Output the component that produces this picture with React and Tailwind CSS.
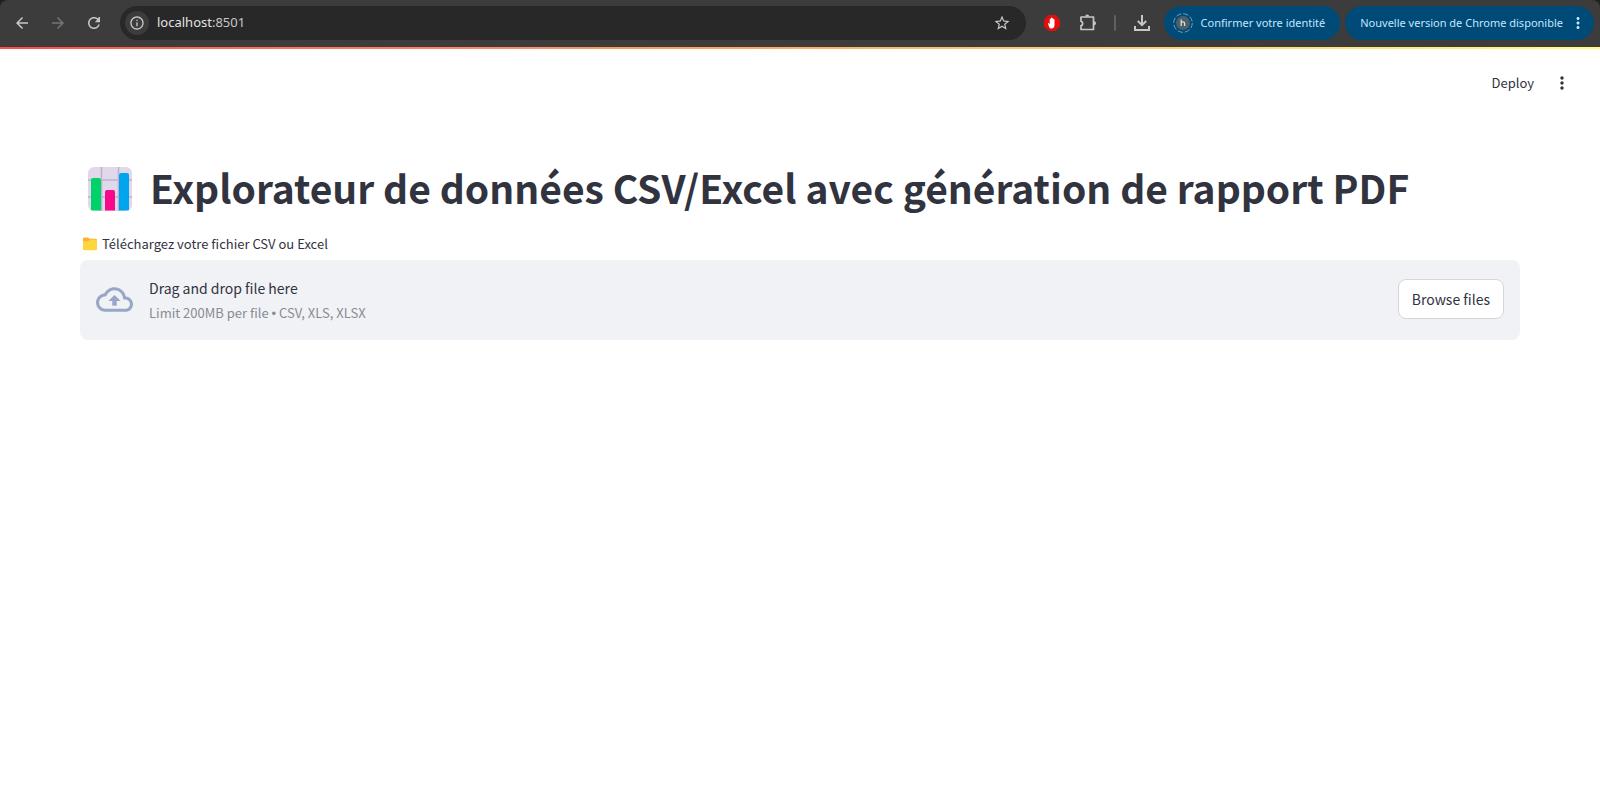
import React, { useRef } from "react";

const sourceSans = "font-['Noto_Sans_CJK_SC',sans-serif]";
const chromeSans = "font-['Noto_Sans','Open_Sans',sans-serif]";

const dots =
  "M12 8c1.100 0 2-.9 2-2s-.9-2-2-2-2 .9-2 2 .9 2 2 2zm0 2c-1.100 0-2 .9-2 2s.9 2 2 2 2-.9 2-2-.9-2-2-2zm0 6c-1.100 0-2 .9-2 2s.9 2 2 2 2-.9 2-2-.9-2-2-2z";

function Material({ d, className }) {
  return (
    <svg viewBox="0 0 24 24" fill="currentColor" aria-hidden="true" className={className}>
      <path d={d} />
    </svg>
  );
}

function NavButton({ label, d, className }) {
  return (
    <button type="button" aria-label={label} className={`flex size-9 items-center justify-center ${className ?? ""}`}>
      <Material d={d} className="size-[18px]" />
    </button>
  );
}

function BlockerIcon() {
  return (
    <svg viewBox="0 0 16 16" className="size-4" aria-hidden="true">
      <path d="M4.700 0h6.600L16 4.700v6.600L11.300 16H4.700L0 11.300V4.700z" fill="#e40d0d" />
      <path
        d="M4 8.200c.5-.3 1 0 1.300.5l.4.7V4.300c0-.9 1.100-.9 1.100 0V3.200c0-.9 1.300-.9 1.300 0v.5c0-.8 1.200-.8 1.200 0v1c0-.8 1.200-.8 1.200 0v5.100c0 2.500-1.100 3.800-3 3.800-1.600 0-2.100-.9-2.600-2.100z"
        fill="#fff"
      />
    </svg>
  );
}

function ExtensionIcon() {
  return (
    <svg viewBox="0 0 18 18" className="size-[18px]" aria-hidden="true">
      <path d="M2 3h12.500v12.500H2v-3.800c2.300-.4 2.300-4 0-4.400z" fill="none" stroke="#c7c7c7" strokeWidth="1.700" strokeLinejoin="round" />
      <path d="M6.200 2.500a2 2 0 0 1 4 0zM15 7.300a2 2 0 0 1 0 4z" fill="#c7c7c7" />
    </svg>
  );
}

function ProfileIcon() {
  return (
    <svg viewBox="0 0 20 20" className="size-5" aria-hidden="true">
      <circle cx="10" cy="10" r="9.300" fill="none" stroke="#6fa0bf" strokeWidth="1" strokeDasharray="5.300 2" />
      <circle cx="10" cy="10" r="7" fill="#4f5f68" />
      <path d="M8.200 6.500v6.500M8.200 10.300c0-2 3.400-2 3.400 0v2.700" fill="none" stroke="#d6dde1" strokeWidth="1.300" />
    </svg>
  );
}

function ChartEmoji() {
  return (
    <svg viewBox="0 0 44 44" className="size-11 shrink-0" aria-hidden="true">
      <defs>
        <clipPath id="chart-card">
          <rect width="44" height="44" rx="6" />
        </clipPath>
      </defs>
      <g clipPath="url(#chart-card)">
        <rect width="44" height="44" fill="#e1d8ec" />
        <path d="M13.500 0v44M30.500 0v44M0 13h44M0 30h44" stroke="#bdb2c8" strokeWidth="1.500" />
        <path d="M3 43.500V13a2 2 0 0 1 2-2h6a2 2 0 0 1 2 2v30.500z" fill="#00d26a" />
        <path d="M17 43.500V25a2 2 0 0 1 2-2h6a2 2 0 0 1 2 2v18.500z" fill="#f8098a" />
        <path d="M31 43.500V8a2 2 0 0 1 2-2h6a2 2 0 0 1 2 2v35.500z" fill="#00a6ed" />
      </g>
    </svg>
  );
}

function FolderEmoji() {
  return (
    <svg viewBox="0 0 14 14" className="size-3.5" aria-hidden="true">
      <path d="M0 1.500a1 1 0 0 1 1-1h4l1.500 1.200H13a1 1 0 0 1 1 1V8H0z" fill="#ffb02e" />
      <path d="M0 4.200h5.300L7 2.800h6a1 1 0 0 1 1 1v8.400a1 1 0 0 1-1 1H1a1 1 0 0 1-1-1z" fill="#fcd53f" />
    </svg>
  );
}

function BrowserBar() {
  return (
    <div className="bg-[#1f2020]">
      <div className={`flex h-[47px] items-center rounded-t-lg bg-[#3c3c3c] pr-1.5 pb-px pl-1 text-[#c7c7c7] ${chromeSans}`}>
        <NavButton label="Retour" d="M20 11H7.830l5.590-5.590L12 4l-8 8 8 8 1.410-1.410L7.830 13H20v-2z" />
        <NavButton label="Avancer" d="m12 4-1.410 1.410L16.170 11H4v2h12.170l-5.580 5.590L12 20l8-8z" className="text-[#757575]" />
        <NavButton
          label="Actualiser"
          d="M17.650 6.350C16.200 4.900 14.210 4 12 4c-4.420 0-7.990 3.580-7.990 8s3.570 8 7.990 8c3.730 0 6.840-2.550 7.730-6h-2.080c-.82 2.330-3.040 4-5.650 4-3.310 0-6-2.690-6-6s2.690-6 6-6c1.660 0 3.140.69 4.220 1.780L13 11h7V4h-2z"
        />
        <div className="ml-2 flex h-[34px] min-w-0 grow items-center rounded-full bg-[#282828] pr-3 pl-[5px]">
          <button type="button" aria-label="Informations sur le site" className="flex size-6 shrink-0 items-center justify-center rounded-full bg-[#3c3c3c]">
            <Material
              d="M11 7h2v2h-2zm0 4h2v6h-2zm1-9C6.480 2 2 6.480 2 12s4.480 10 10 10 10-4.480 10-10S17.520 2 12 2zm0 18c-4.410 0-8-3.590-8-8s3.590-8 8-8 8 3.590 8 8-3.590 8-8 8z"
              className="size-4"
            />
          </button>
          <a href="#top" className="ml-2 grow truncate text-[13px] text-[#e3e3e3]">
            localhost<span className="text-[#c7c7c7]">:8501</span>
          </a>
          <button type="button" aria-label="Ajouter aux favoris" className="flex size-6 items-center justify-center">
            <Material
              d="m22 9.240-7.190-.62L12 2 9.190 8.630 2 9.240l5.460 4.730L5.820 21 12 17.270 18.180 21l-1.630-7.030zM12 15.400l-3.760 2.270 1-4.280-3.320-2.880 4.380-.38L12 6.100l1.710 4.040 4.380.38-3.320 2.880 1 4.280z"
              className="size-[18px]"
            />
          </button>
        </div>
        <div className="flex items-center pl-2">
          <button type="button" aria-label="Bloqueur de publicités" className="flex size-9 items-center justify-center">
            <BlockerIcon />
          </button>
          <button type="button" aria-label="Extensions" className="flex size-9 items-center justify-center">
            <ExtensionIcon />
          </button>
          <span className="mx-2 h-4 w-0.5 rounded bg-[#606060]" />
          <button type="button" aria-label="Téléchargements" className="flex size-9 items-center justify-center">
            <svg viewBox="0 0 18 18" className="size-[18px]" fill="none" stroke="currentColor" strokeWidth="2" aria-hidden="true">
              <path d="M9 1v10M4.800 7 9 11.200 13.200 7M2 12v4h14v-4" />
            </svg>
          </button>
        </div>
        <button type="button" className="ml-1 flex h-[34px] shrink-0 items-center gap-2 rounded-full bg-[#004a77] pr-[15px] pl-[9px] text-[11px] text-[#c2e7ff]">
          <ProfileIcon />
          Confirmer votre identité
        </button>
        <button type="button" className="ml-[5px] flex h-[34px] shrink-0 items-center gap-1.5 rounded-full bg-[#004a77] pr-[7px] pl-[15px] text-[11px] text-[#c2e7ff]">
          Nouvelle version de Chrome disponible
          <Material d={dots} className="size-[18px]" />
        </button>
      </div>
    </div>
  );
}

export default function App() {
  const fileInput = useRef(null);
  return (
    <div id="top" className="min-h-screen bg-white text-[#31333f]">
      <BrowserBar />
      <div className="h-0.5 bg-linear-to-r from-[#ff4b4b] to-[#fffd80]" />
      <header className={`flex h-[68px] items-center justify-end gap-[18px] pr-7 ${sourceSans}`}>
        <button type="button" className="text-[13px]">Deploy</button>
        <button type="button" aria-label="Menu" className="flex size-5 items-center justify-center">
          <Material d={dots} className="size-5" />
        </button>
      </header>
      <main className={`px-20 pt-[42px] ${sourceSans}`}>
        <h1 className="flex h-[60px] items-center gap-[18px] pl-2 text-[39px] leading-[56px] font-bold">
          <ChartEmoji />
          <span className="pb-1">Explorateur de données CSV/Excel avec génération de rapport PDF</span>
        </h1>
        <label htmlFor="upload" className="mt-4 flex h-[18px] items-center gap-[5px] pl-[3px] text-[13px]">
          <FolderEmoji />
          Téléchargez votre fichier CSV ou Excel
        </label>
        <section className="mt-[7px] flex items-center rounded-lg bg-[#f0f2f6] px-4 pt-[14px] pb-4">
          <Material
            d="M19.350 10.040C18.670 6.590 15.640 4 12 4 9.110 4 6.600 5.640 5.350 8.040 2.340 8.360 0 10.910 0 14c0 3.310 2.690 6 6 6h13c2.760 0 5-2.240 5-5 0-2.640-2.050-4.780-4.650-4.960zM19 18H6c-2.210 0-4-1.790-4-4 0-2.050 1.530-3.760 3.560-3.970l1.070-.11.5-.95C8.080 7.140 9.940 6 12 6c2.620 0 4.880 1.860 5.390 4.430l.3 1.500 1.530.11c1.560.1 2.780 1.410 2.780 2.960 0 1.650-1.350 3-3 3zM8 13h2.550v3h2.900v-3H16l-4-4z"
            className="size-[37px] shrink-0 text-[#98a7c7]"
          />
          <div className="ml-4 flex grow flex-col">
            <span className="text-sm leading-[29px]">Drag and drop file here</span>
            <span className="text-[13px] leading-[20px] text-[#898b93]">
              Limit 200MB per file <span className="font-['Liberation_Sans',sans-serif]">•</span> CSV, XLS, XLSX
            </span>
          </div>
          <input ref={fileInput} id="upload" type="file" accept=".csv,.xls,.xlsx" className="hidden" />
          <button
            type="button"
            onClick={() => fileInput.current.click()}
            className="h-10 rounded-lg border border-[#d6d6da] bg-white px-[13px] text-sm"
          >
            Browse files
          </button>
        </section>
      </main>
    </div>
  );
}
